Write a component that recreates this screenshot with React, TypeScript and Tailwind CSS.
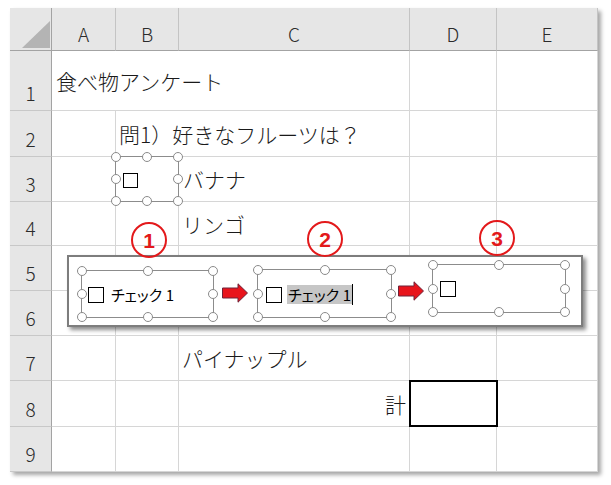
import React from "react";

const HANDLE_POS = [
  "left-0 top-0",
  "left-1/2 top-0",
  "left-full top-0",
  "left-0 top-1/2",
  "left-full top-1/2",
  "left-0 top-full",
  "left-1/2 top-full",
  "left-full top-full",
];

function Handles() {
  return (
    <>
      {HANDLE_POS.map((p, i) => (
        <span
          key={i}
          className={`absolute ${p} w-[10px] h-[10px] -translate-x-1/2 -translate-y-1/2 rounded-full border-[1.5px] border-[#8a8a8a] bg-white`}
        />
      ))}
    </>
  );
}

function Box() {
  return <span className="block w-4 h-4 border border-black bg-white shrink-0" />;
}

function Arrow() {
  return (
    <svg width="26" height="20" viewBox="0 0 26 20" className="block">
      <polygon
        points="0.5,5 16,5 16,0.8 25.5,10 16,19.2 16,15 0.5,15"
        fill="#e8141c"
        stroke="#6e2238"
        strokeWidth="1"
      />
    </svg>
  );
}

function Num({ n, cls }: { n: string; cls: string }) {
  return (
    <div
      className={`absolute ${cls} w-[36px] h-[36px] rounded-full border-[2.5px] border-[#e3191b] flex items-center justify-center text-[#e3191b] text-[21px] font-bold font-['Liberation_Sans',sans-serif] leading-none`}
    >
      {n}
    </div>
  );
}

const hdr = "bg-[#e6e6e6] border-r border-b border-r-[#c4c4c4] border-b-[#a3a3a3] flex items-center justify-center pt-[9px] text-[19px] text-[#2b2b2b] leading-[26px]";
const rowHdr = "bg-[#e6e6e6] border-r border-b border-r-[#a3a3a3] border-b-[#c8c8c8] flex items-end justify-center pb-[4px] text-[19px] text-[#2b2b2b] leading-[26px]";
const cell = "border-r border-b border-[#d6d6d6] flex items-center whitespace-nowrap text-[21px] text-[#1a1a1a] leading-[28px]";

export default function App() {
  return (
    <div className="relative w-[611px] h-[485px] bg-white pt-[8px] pl-[10px] font-['Noto_Sans_CJK_JP','Noto_Sans',sans-serif] font-light">
      <div className="w-[588px] h-[464px] grid grid-cols-[42px_64px_63px_231px_87px_101px] grid-rows-[43px_60px_46px_45px_44px_45px_45px_45px_46px_45px] shadow-[3px_3px_4px_rgba(0,0,0,0.35)] bg-white">
        {/* header */}
        <div className="bg-[#e6e6e6] border-r border-b border-r-[#a3a3a3] border-b-[#a3a3a3] flex items-end justify-end pr-[1px] pb-[2px]">
          <svg width="28" height="27" viewBox="0 0 28 27" className="block">
            <polygon points="0,27 28,27 28,0" fill="#b4b4b4" />
          </svg>
        </div>
        <div className={hdr}>A</div>
        <div className={hdr}>B</div>
        <div className={`${hdr} bg-[#9fd5b7]`}>C</div>
        <div className={hdr}>D</div>
        <div className={hdr}>E</div>

        {/* row 1 */}
        <div className={rowHdr}>1</div>
        <div className={`${cell} col-span-3 pl-[4px]`}>食べ物アンケート</div>
        <div className={cell} />
        <div className={cell} />

        {/* row 2 */}
        <div className={rowHdr}>2</div>
        <div className={cell} />
        <div className={`${cell} col-span-2 pl-[3px]`}>問1）好きなフルーツは？</div>
        <div className={cell} />
        <div className={cell} />

        {/* row 3 */}
        <div className={rowHdr}>3</div>
        <div className={cell} />
        <div className={cell} />
        <div className={`${cell} pl-[4px]`}>バナナ</div>
        <div className={cell} />
        <div className={cell} />

        {/* row 4 */}
        <div className={rowHdr}>4</div>
        <div className={cell} />
        <div className={cell} />
        <div className={`${cell} pl-[3px]`}>リンゴ</div>
        <div className={cell} />
        <div className={cell} />

        {/* row 5 */}
        <div className={rowHdr}>5</div>
        <div className={cell} />
        <div className={cell} />
        <div className={cell} />
        <div className={cell} />
        <div className={cell} />

        {/* row 6 */}
        <div className={rowHdr}>6</div>
        <div className={cell} />
        <div className={cell} />
        <div className={cell} />
        <div className={cell} />
        <div className={cell} />

        {/* row 7 */}
        <div className={rowHdr}>7</div>
        <div className={cell} />
        <div className={cell} />
        <div className={`${cell} pl-[3px]`}>パイナップル</div>
        <div className={cell} />
        <div className={cell} />

        {/* row 8 */}
        <div className={rowHdr}>8</div>
        <div className={cell} />
        <div className={cell} />
        <div className={`${cell} justify-end pr-[3px]`}>計</div>
        <div className={`${cell} relative`}>
          <div className="absolute -left-[1px] -top-[1px] w-[89px] h-[47px] border-2 border-black" />
        </div>
        <div className={cell} />

        {/* row 9 */}
        <div className={rowHdr}>9</div>
        <div className={cell} />
        <div className={cell} />
        <div className={cell} />
        <div className={cell} />
        <div className={cell} />
      </div>

      {/* form control in B3 */}
      <div className="absolute left-[115px] top-[156px] w-[64px] h-[46px] border border-[#8c8c8c] flex items-center pl-[7px] pt-[3px]">
        <span className="block w-[15px] h-[15px] border border-black bg-white" />
        <Handles />
      </div>

      {/* illustration panel */}
      <div className="absolute left-[67px] top-[255px] w-[516px] h-[72px] bg-white border-2 border-[#7d7d7d] shadow-[3px_3px_4px_rgba(0,0,0,0.45)] flex items-start pl-[12px] font-normal text-black text-[15px] leading-[20px] [font-feature-settings:'palt']">
        <div className="relative mt-[13px] w-[133px] h-[48px] border border-[#8c8c8c] flex items-center pl-[6px] pt-[2px] shrink-0">
          <Box />
          <span className="ml-[7px] whitespace-nowrap">チェック 1</span>
          <Handles />
        </div>
        <div className="ml-[8px] mt-[26px] shrink-0">
          <Arrow />
        </div>
        <div className="relative ml-[9px] mt-[12px] w-[135px] h-[49px] border border-[#8c8c8c] flex items-center pl-[8px] pt-[2px] shrink-0">
          <Box />
          <span className="ml-[5px] whitespace-nowrap bg-[#c6c6c6] px-[1px] leading-[19px]">チェック 1</span>
          <span className="block w-px h-[21px] bg-black" />
          <Handles />
        </div>
        <div className="ml-[6px] mt-[24px] shrink-0">
          <Arrow />
        </div>
        <div className="relative ml-[8px] mt-[7px] w-[134px] h-[49px] border border-[#8c8c8c] flex items-center pl-[7px] pt-[1px] shrink-0">
          <Box />
          <Handles />
        </div>
      </div>

      <Num n="1" cls="left-[131px] top-[222px]" />
      <Num n="2" cls="left-[307px] top-[221px]" />
      <Num n="3" cls="left-[479px] top-[220px]" />
    </div>
  );
}
